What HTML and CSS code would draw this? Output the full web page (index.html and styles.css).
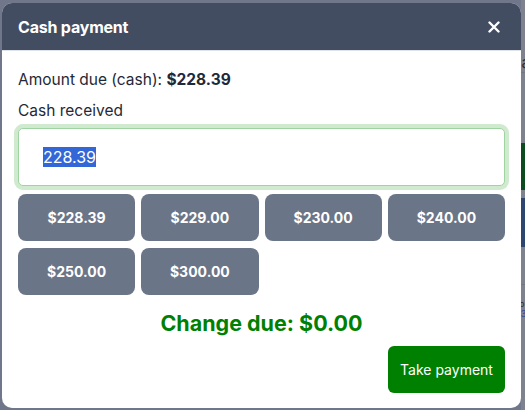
FILE: index.html
```html
<!DOCTYPE html>
<html>
<head>
<meta charset="utf-8">
<link rel="stylesheet" href="styles.css">
</head>
<body>
<div class="page">
  <div class="page-col">
    <div class="pg-gap h54"></div>
    <div class="pg-text">Sales</div>
    <div class="pg-line"></div>
    <div class="pg-gap h70"></div>
    <div class="pg-green"></div>
    <div class="pg-gap h8"></div>
    <div class="pg-blue"></div>
    <div class="pg-gap h37"></div>
    <div class="pg-line"></div>
    <div class="pg-gap h14"></div>
    <div class="pg-text small">Sub</div>
    <div class="pg-text small blue">$3</div>
  </div>
</div>

<div class="modal">
  <div class="modal-header">
    <h2 class="modal-title">Cash payment</h2>
    <button class="close-btn" aria-label="Close">
      <svg width="12" height="12" viewBox="0 0 12 12"><path d="M1.5 1.5 L10.5 10.5 M10.5 1.5 L1.5 10.5" stroke="#fff" stroke-width="2.4" stroke-linecap="round"/></svg>
    </button>
  </div>
  <div class="modal-body">
    <p class="amount-due">Amount due (cash): <strong>$228.39</strong></p>
    <label class="field-label" for="cash">Cash received</label>
    <input id="cash" class="cash-input" type="text" value="228.39">
    <div class="quick-grid">
      <button class="quick-btn">$228.39</button>
      <button class="quick-btn">$229.00</button>
      <button class="quick-btn">$230.00</button>
      <button class="quick-btn">$240.00</button>
      <button class="quick-btn">$250.00</button>
      <button class="quick-btn">$300.00</button>
    </div>
    <div class="change-due">Change due: $0.00</div>
    <div class="actions">
      <button class="take-btn">Take payment</button>
    </div>
  </div>
</div>
<script src="script.js"></script>
</body>
</html>
```

FILE: styles.css
```css
html, body {
  margin: 0;
  padding: 0;
}
body {
  width: 525px;
  height: 410px;
  overflow: hidden;
  background: #70778a;
  font-family: Inter, "Noto Sans", sans-serif;
  position: relative;
}
.page {
  display: flex;
  justify-content: flex-end;
  height: 410px;
}
.page-col {
  width: 4px;
  background: #7d828e;
  display: flex;
  flex-direction: column;
  overflow: hidden;
}
.pg-gap.h54 { height: 54px; }
.pg-gap.h70 { height: 70px; }
.pg-gap.h8 { height: 8px; }
.pg-gap.h37 { height: 37px; }
.pg-gap.h14 { height: 14px; }
.pg-text {
  font-size: 15px;
  line-height: 18px;
  color: #2a2f3a;
  white-space: nowrap;
  overflow: hidden;
  text-indent: -9px;
}
.pg-text.small { font-size: 9px; line-height: 10px; height: 10px; text-indent: -13px; }
.pg-text.blue { color: #2b4aa0; text-indent: -6px; }
.pg-line {
  height: 1px;
  background: #727784;
}
.pg-green {
  height: 47px;
  background: #0c4a20;
}
.pg-blue {
  height: 49px;
  background: #2c4670;
}

.modal {
  position: absolute;
  left: 2px;
  top: 3px;
  width: 519px;
  background: #fff;
  border-radius: 10px;
  overflow: hidden;
}
.modal-header {
  height: 48px;
  background: #434d62;
  display: flex;
  align-items: center;
  justify-content: space-between;
  padding: 0 16px;
  border-bottom: 1px solid #dfe3ea;
  box-sizing: border-box;
}
.modal-title {
  margin: 0;
  color: #fff;
  font-size: 16px;
  font-weight: 700;
  letter-spacing: -0.2px;
}
.close-btn {
  background: none;
  border: 0;
  padding: 0;
  margin-right: 5px;
  width: 12px;
  height: 12px;
  display: flex;
}
.modal-body {
  padding: 18px 16px 15px;
}
.amount-due {
  margin: 0;
  font-size: 15.5px;
  line-height: 22px;
  color: #1f2937;
}
.amount-due strong {
  font-weight: 700;
}
.field-label {
  display: block;
  margin-top: 9px;
  font-size: 15.5px;
  line-height: 22px;
  color: #1f2937;
}
.cash-input {
  display: block;
  box-sizing: border-box;
  width: 100%;
  height: 58px;
  margin-top: 6px;
  padding: 0 24px;
  border: 1px solid #9fd3a1;
  border-radius: 5px;
  box-shadow: 0 0 0 4px #d0ead0;
  font-family: Inter, "Noto Sans", sans-serif;
  font-size: 16px;
  color: #1f2937;
  outline: none;
}
.cash-input::selection {
  background: #3366d6;
  color: #fff;
}
.quick-grid {
  margin-top: 8px;
  display: grid;
  grid-template-columns: repeat(4, 1fr);
  gap: 7px 6px;
}
.quick-btn {
  height: 47px;
  background: #6b7588;
  color: #fff;
  border: 0;
  border-radius: 8px;
  font-family: Inter, "Noto Sans", sans-serif;
  font-size: 14px;
  font-weight: 700;
}
.change-due {
  margin-top: 14px;
  text-align: center;
  color: #008000;
  font-size: 21.5px;
  line-height: 28px;
  font-weight: 700;
}
.actions {
  display: flex;
  justify-content: flex-end;
  margin-top: 9px;
}
.take-btn {
  width: 117px;
  height: 47px;
  background: #008000;
  color: #fff;
  border: 0;
  border-radius: 6px;
  font-family: Inter, "Noto Sans", sans-serif;
  font-size: 14px;
}
```

FILE: script.js
```js
var el = document.getElementById('cash');
el.focus();
el.select();
```
